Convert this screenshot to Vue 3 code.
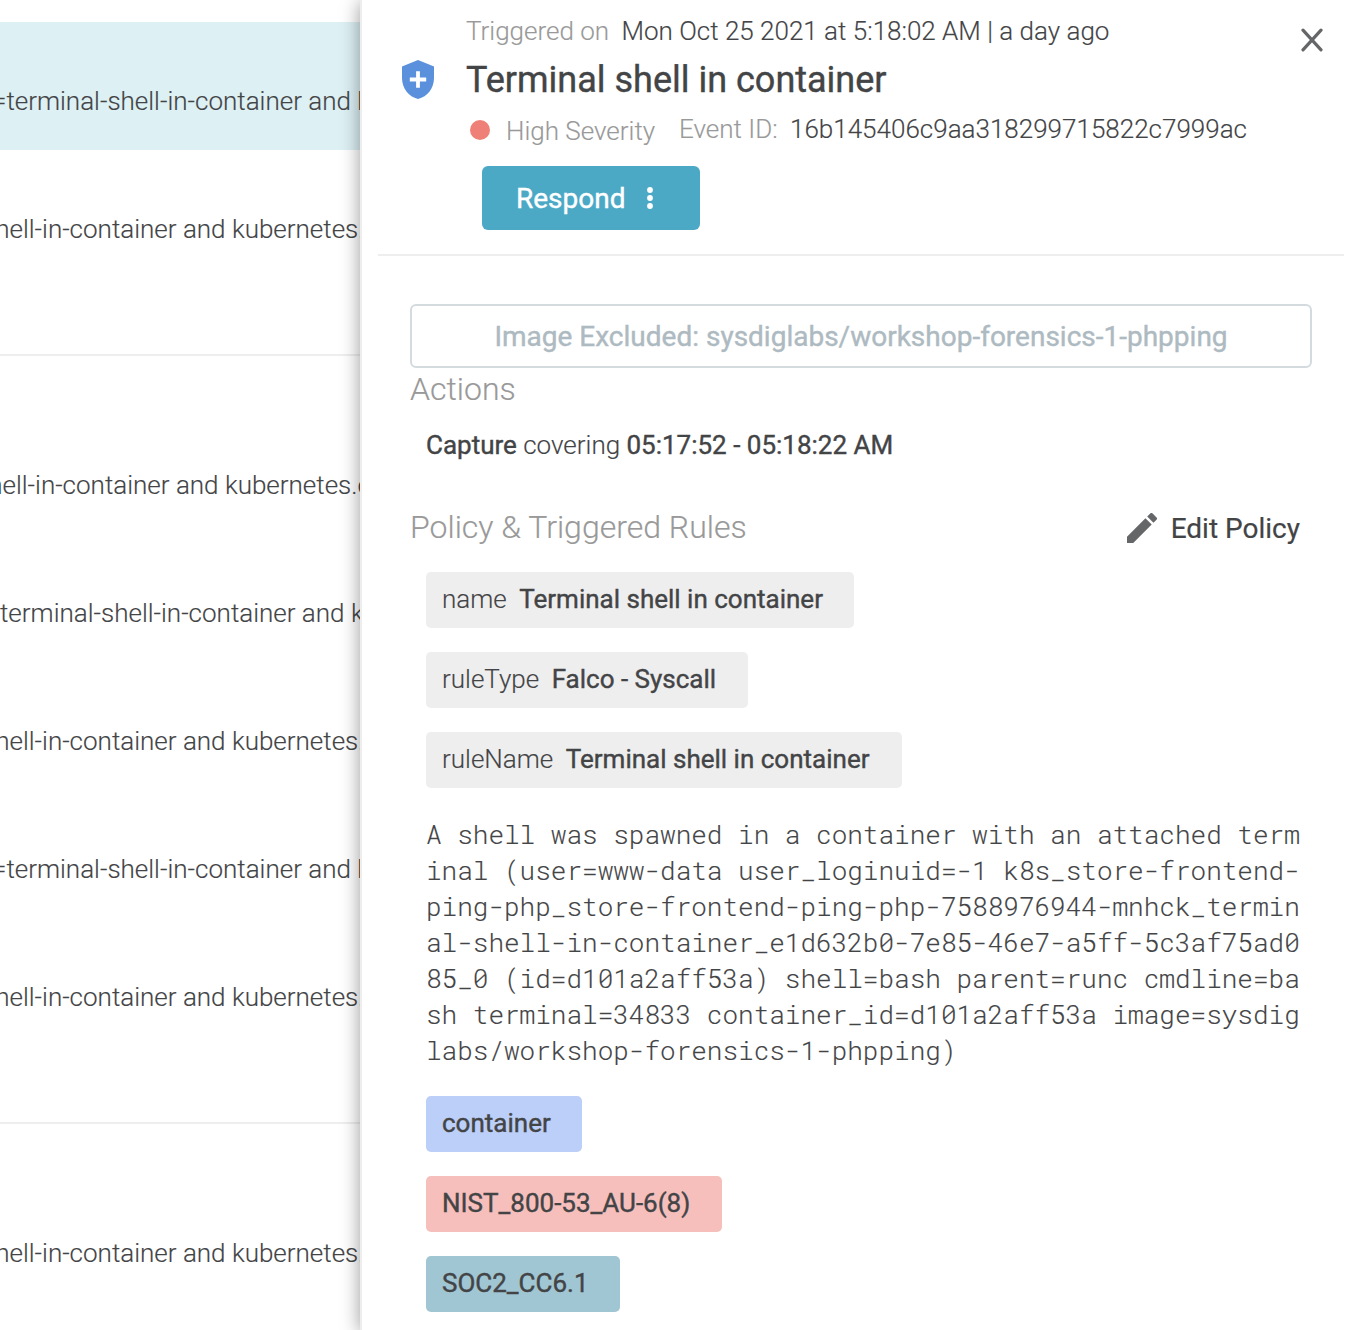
<script setup>
const rows = [
  { t: '=terminal-shell-in-container and k', x: -8, h: 128, on: true },
  { t: 'shell-in-container and kubernetes.', x: -18, h: 206, line: true },
  { t: 'shell-in-container and kubernetes.c', x: -25, h: 178, first: true },
  { t: 'terminal-shell-in-container and k', x: 0, h: 128 },
  { t: 'shell-in-container and kubernetes.', x: -18, h: 128 },
  { t: '=terminal-shell-in-container and k', x: -8, h: 128 },
  { t: 'shell-in-container and kubernetes.', x: -18, h: 206, line: true },
  { t: 'shell-in-container and kubernetes.', x: -18, h: 178, first: true }
]
const tags = [['name', 'Terminal shell in container', 428], ['ruleType', 'Falco - Syscall', 322], ['ruleName', 'Terminal shell in container', 476]]
const labels = [['container', 'blue', 156], ['NIST_800-53_AU-6(8)', 'red', 296], ['SOC2_CC6.1', 'teal', 194]]
const output = `A shell was spawned in a container with an attached term
inal (user=www-data user_loginuid=-1 k8s_store-frontend-
ping-php_store-frontend-ping-php-7588976944-mnhck_termin
al-shell-in-container_e1d632b0-7e85-46e7-a5ff-5c3af75ad0
85_0 (id=d101a2aff53a) shell=bash parent=runc cmdline=ba
sh terminal=34833 container_id=d101a2aff53a image=sysdig
labs/workshop-forensics-1-phpping)`
</script>

<template>
  <div class="page">
    <div class="events">
      <div v-for="(r, i) in rows" :key="i" class="row" :class="{ on: r.on, line: r.line, first: r.first }" :style="{ height: r.h + 'px' }">
        <span :style="{ marginLeft: r.x + 'px' }">{{ r.t }}</span>
      </div>
    </div>
    <main class="panel">
      <header>
        <svg class="shield" width="32" height="39" viewBox="0 0 32 39"><path d="M16 0L32 6.5V18C32 28.5 25.5 36.5 16 39C6.5 36.5 0 28.5 0 18V6.5Z" fill="#5b90dc" /><path d="M16 11.3V27.7M7.8 19.5H24.2" stroke="#fff" stroke-width="3.8" /></svg>
        <div class="head">
          <div class="when"><span class="muted">Triggered on</span><span>Mon Oct 25 2021 at 5:18:02 AM | a day ago</span></div>
          <h1>Terminal shell in container</h1>
          <div class="meta"><i class="dot"></i><span class="sev">High Severity</span><span class="eid">Event ID:</span><span class="id">16b145406c9aa318299715822c7999ac</span></div>
          <button class="respond">Respond<svg width="8" height="24" viewBox="0 0 8 24" fill="#fff"><circle cx="4" cy="4" r="2.9" /><circle cx="4" cy="12" r="2.9" /><circle cx="4" cy="20" r="2.9" /></svg></button>
        </div>
        <svg class="close" width="24" height="24" viewBox="0 0 24 24"><path d="M3 2.2L21 21.8M21 2.2L3 21.8" stroke="#656668" stroke-width="3.2" stroke-linecap="round" /></svg>
      </header>
      <section>
        <div class="excluded">Image Excluded: sysdiglabs/workshop-forensics-1-phpping</div>
        <h2>Actions</h2>
        <p class="capture"><b>Capture</b> covering <b>05:17:52 - 05:18:22 AM</b></p>
        <div class="policy"><h2>Policy &amp; Triggered Rules</h2>
          <span class="edit"><svg width="30" height="30" viewBox="3 3 18 18"><path fill="#656668" d="M3 17.25V21h3.75L17.81 9.94l-3.75-3.75L3 17.25zM20.71 7.04a1 1 0 0 0 0-1.41l-2.34-2.34a1 1 0 0 0-1.41 0l-1.83 1.83 3.75 3.75 1.83-1.83z" /></svg><span>Edit Policy</span></span>
        </div>
        <div v-for="t in tags" :key="t[0]" class="tag" :style="{ width: t[2] + 'px' }"><span>{{ t[0] }}</span><b>{{ t[1] }}</b></div>
        <pre>{{ output }}</pre>
        <div v-for="l in labels" :key="l[0]" class="tag" :class="l[1]" :style="{ width: l[2] + 'px' }"><b>{{ l[0] }}</b></div>
      </section>
    </main>
  </div>
</template>

<style>
body { margin: 0; overflow: hidden; }
</style>
<style scoped>
* { box-sizing: border-box; }
.page { display: flex; width: 1360px; height: 1330px; overflow: hidden; background: #fff; font: 300 26px/32px Roboto, sans-serif; color: #434446; -webkit-text-stroke: 0.15px; }
.events { width: 360px; flex: none; padding-top: 22px; overflow: hidden; }
.row { padding-top: 63px; white-space: nowrap; }
.row.on { background: #ddf0f4; }
.row.line { border-bottom: 2px solid #eee; }
.row.first { padding-top: 113px; }
.panel { width: 1000px; flex: none; position: relative; background: #fff; border-left: 2px solid #eee; box-shadow: 0 2px 18px rgba(0,0,0,.4); }
header { display: flex; height: 256px; margin: 0 16px; padding-left: 24px; border-bottom: 2px solid #eee; }
.shield { margin-top: 60px; flex: none; }
.head { margin-left: 33px; padding-top: 15px; width: 833px; flex: none; white-space: nowrap; }
.when { display: flex; margin-left: -1px; }
.muted { color: #999; width: 155.5px; }
h1 { margin: 11px 0 0 -1px; font-size: 36px; line-height: 44px; font-weight: 400; -webkit-text-stroke: 0.4px; }
.meta { display: flex; margin-top: 11px; }
.dot { width: 20px; height: 20px; border-radius: 50%; background: #ef8078; margin: 7px 16px 0 3px; }
.sev { color: #999; margin-top: 2px; width: 173px; }
.eid { color: #999; width: 111px; }
.respond { display: flex; align-items: center; margin: 19px 0 0 15px; width: 218px; height: 64px; padding: 0 0 0 34px; border: 0; border-radius: 6px; background: #4ba9c6; color: #fff; font: 400 28px Roboto, sans-serif; gap: 20px; -webkit-text-stroke: 0.4px; }
.close { margin: 28px 0 0 0; flex: none; }
section { padding: 48px 48px 0; }
.excluded { height: 64px; border: 2px solid #d4dbdf; border-radius: 6px; text-align: center; font-size: 28px; line-height: 61px; font-weight: 400; color: #aebac1; -webkit-text-stroke: 0.4px; }
h2 { margin: 0; font-size: 32px; line-height: 42px; font-weight: 300; color: #999; }
.capture { margin: 19px 16px 0; line-height: 32px; }
b { font-weight: 400; -webkit-text-stroke: 0.4px; }
.policy { display: flex; justify-content: space-between; margin: 45px 12px 24px 0; }
.edit { display: flex; align-items: center; font-size: 28px; font-weight: 400; gap: 14px; padding-top: 3px; -webkit-text-stroke: 0.2px; }
.edit svg { margin-bottom: 2px; }
.tag { display: flex; height: 56px; padding: 0 16px; margin: 0 0 24px 16px; gap: 12.5px; line-height: 54px; background: #eee; border-radius: 5px; white-space: nowrap; }
.blue { background: #bccff8; }
.red { background: #f6bfbc; }
.teal { background: #a1c6d3; }
pre { margin: 28px 0 28px 16px; font: 300 26px/36px "Roboto Mono", "DejaVu Sans Mono", monospace; }
</style>
